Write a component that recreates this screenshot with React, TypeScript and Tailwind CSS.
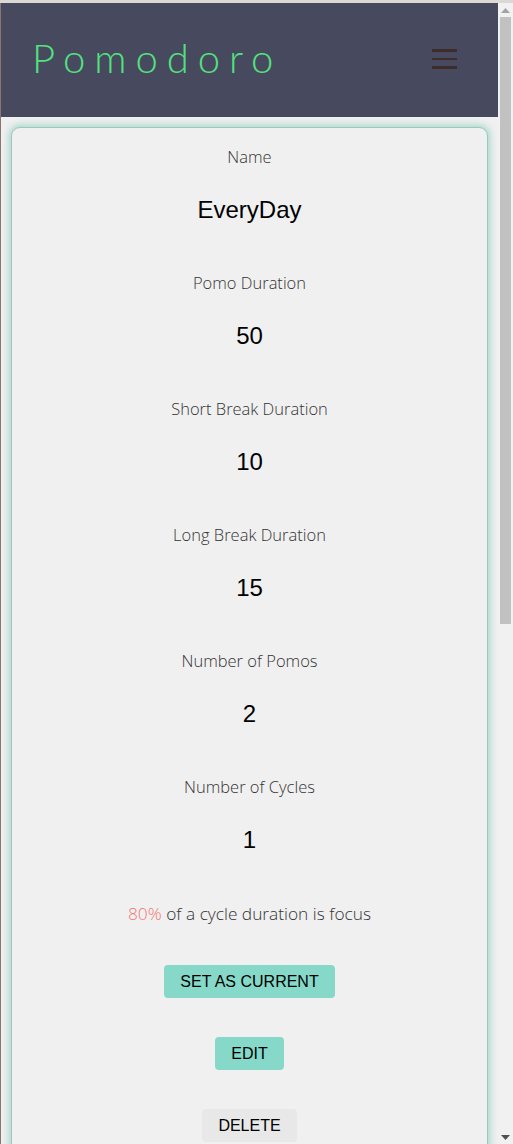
import React from "react";

const rows: { label: string; value: string }[] = [
  { label: "Name", value: "EveryDay" },
  { label: "Pomo Duration", value: "50" },
  { label: "Short Break Duration", value: "10" },
  { label: "Long Break Duration", value: "15" },
  { label: "Number of Pomos", value: "2" },
  { label: "Number of Cycles", value: "1" },
];

const labelFont = { fontFamily: "'Open Sans', 'Noto Sans', sans-serif" };
const valueFont = { fontFamily: "'Liberation Sans', Arial, sans-serif" };

export default function App() {
  return (
    <div className="flex h-[1144px] w-[513px] flex-col overflow-hidden bg-[#f0f0f0]">
      <div className="h-[3px] w-full shrink-0 bg-[#dcd8d3]" />
      <div className="flex min-h-0 flex-1">
        <div className="w-[1px] shrink-0 bg-[#8c7474]" />
        <div className="flex min-w-0 flex-1 flex-col overflow-hidden">
          <header className="flex h-[114px] shrink-0 items-center justify-between bg-[#474a5e] pl-[31px] pr-[41px]">
            <h1
              className="-mt-[4px] text-[40px] font-light leading-none tracking-[9px] text-[#52e27e]"
              style={{ fontFamily: "Lato, 'Open Sans', sans-serif" }}
            >
              Pomodoro
            </h1>
            <div className="-mt-[2px] flex w-[25px] flex-col gap-[5.5px]">
              <span className="block h-[2.7px] w-full bg-[#3e2b2b]" />
              <span className="block h-[2.7px] w-full bg-[#3e2b2b]" />
              <span className="block h-[2.7px] w-full bg-[#3e2b2b]" />
            </div>
          </header>
          <main className="shrink-0 px-[10px] pt-[10px]">
            <div className="flex flex-col items-center rounded-[9px] border border-[#98cabe] bg-[#f0f0f0] pt-[18px] pb-[40px] shadow-[0_0_7px_2px_#a6d6ca]">
              {rows.map((r, i) => (
                <div key={i} className="flex flex-col items-center">
                  <div
                    className="text-[16.5px] font-light leading-[22px] text-[#333]"
                    style={labelFont}
                  >
                    {r.label}
                  </div>
                  <div
                    className="mt-[28px] mb-[48px] text-[24px] leading-[28px] text-black"
                    style={valueFont}
                  >
                    {r.value}
                  </div>
                </div>
              ))}
              <div
                className="mt-[1px] text-[17.3px] font-light leading-[22px] text-[#333]"
                style={labelFont}
              >
                <span className="text-[#f07575]">80%</span> of a cycle duration is focus
              </div>
              <button
                className="mt-[40px] h-[33px] rounded-[4px] bg-[#86d9c8] px-[16px] text-[16px] text-black"
                style={valueFont}
              >
                SET AS CURRENT
              </button>
              <button
                className="mt-[39px] h-[33px] rounded-[4px] bg-[#86d9c8] px-[16px] text-[16px] text-black"
                style={valueFont}
              >
                EDIT
              </button>
              <button
                className="mt-[39px] h-[33px] rounded-[4px] bg-[#e8e8e8] px-[16px] text-[16px] text-black"
                style={valueFont}
              >
                DELETE
              </button>
            </div>
          </main>
        </div>
        <div className="relative flex w-[15px] shrink-0 flex-col items-center bg-[#f1f1f1]">
          <svg width="9" height="5" viewBox="0 0 9 5" className="mt-[5px]">
            <polygon points="0,5 9,5 4.5,0" fill="#a3a3a3" />
          </svg>
          <div className="mt-[4px] h-[607px] w-[11px] bg-[#c1c1c1]" />
          <div className="flex-1" />
          <svg width="9" height="5" viewBox="0 0 9 5" className="mb-[4px]">
            <polygon points="0,0 9,0 4.5,5" fill="#505050" />
          </svg>
        </div>
      </div>
    </div>
  );
}
